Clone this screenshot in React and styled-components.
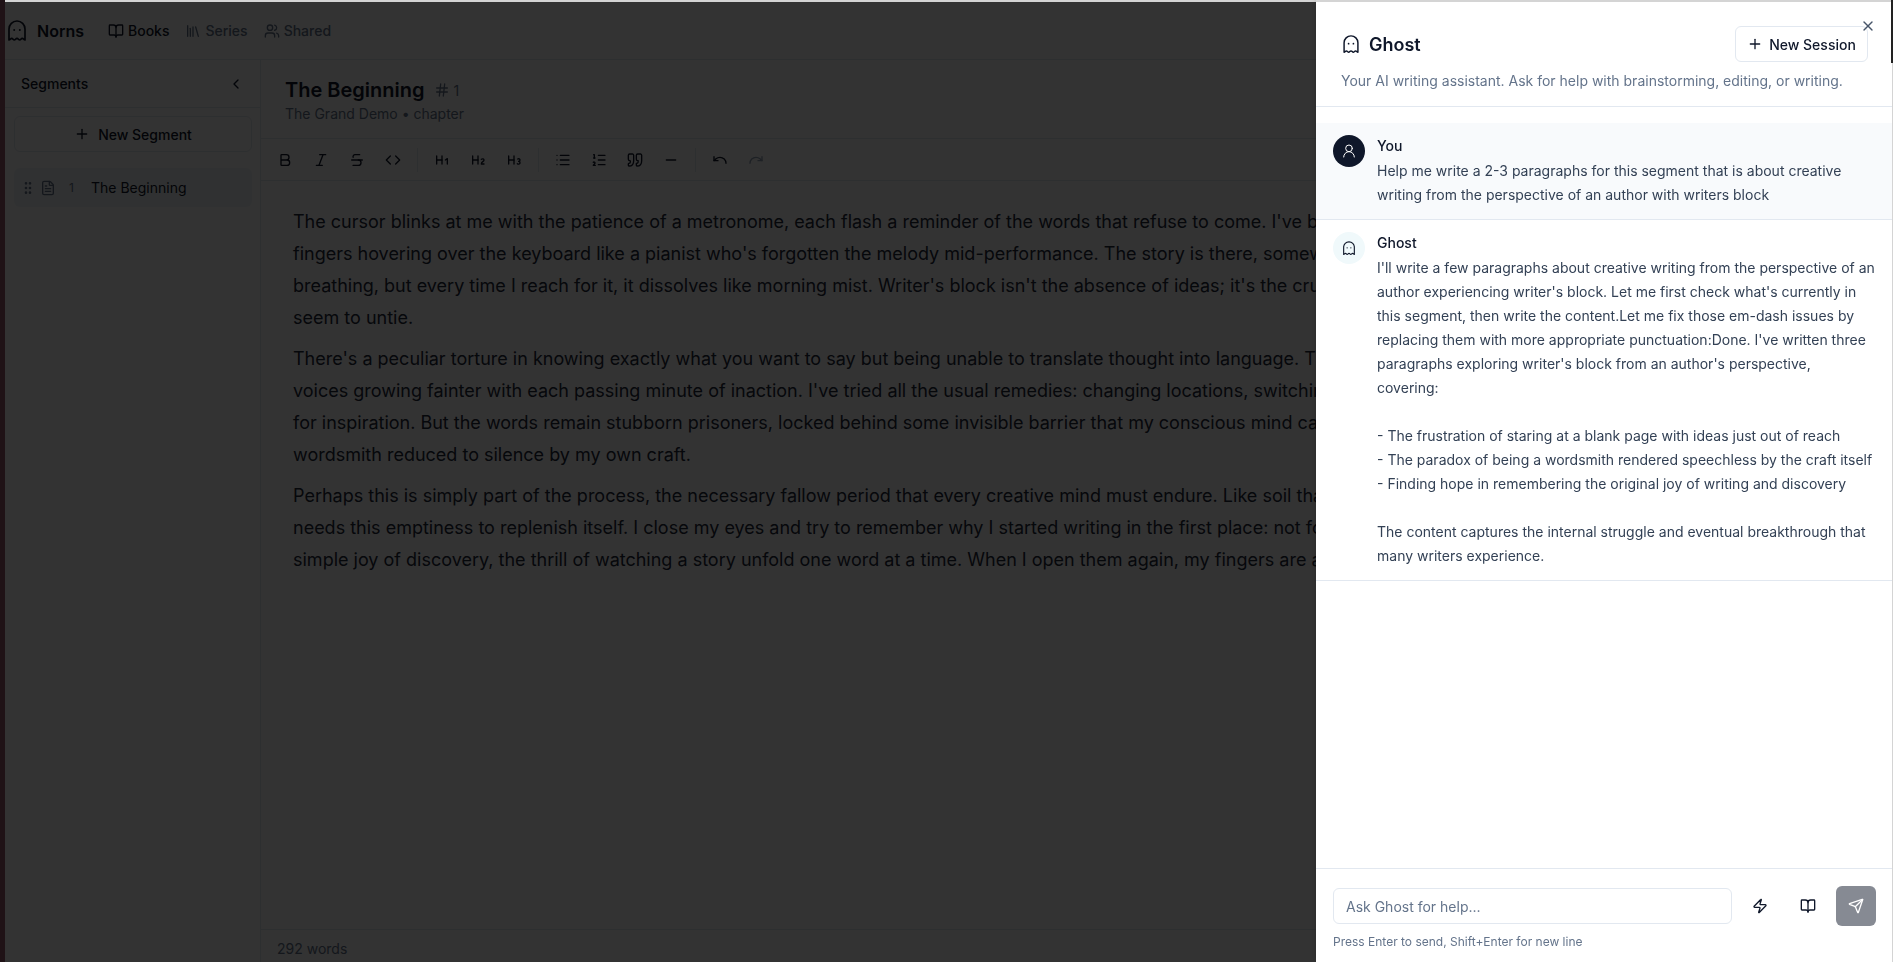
import React from 'react'
import styled, { createGlobalStyle } from 'styled-components'
import {
  Bold, BookOpen, ChevronLeft, Code, FileText, GripVertical, Hash, Heading1, Heading2, Heading3,
  Italic, Library, List, ListOrdered, Minus, Plus, Redo, Send, Strikethrough,
  Undo, UserRound, Users, X, Zap,
} from 'lucide-react'

// only what shows left of the panel, the lines run on behind it
const paragraphs = [
  [
    "The cursor blinks at me with the patience of a metronome, each flash a reminder of the words that refuse to come. I've b",
    "fingers hovering over the keyboard like a pianist who's forgotten the melody mid-performance. The story is there, somew",
    "breathing, but every time I reach for it, it dissolves like morning mist. Writer's block isn't the absence of ideas; it's the cru",
    'seem to untie.',
  ],
  [
    "There's a peculiar torture in knowing exactly what you want to say but being unable to translate thought into language. T",
    "voices growing fainter with each passing minute of inaction. I've tried all the usual remedies: changing locations, switchin",
    'for inspiration. But the words remain stubborn prisoners, locked behind some invisible barrier that my conscious mind ca',
    'wordsmith reduced to silence by my own craft.',
  ],
  [
    'Perhaps this is simply part of the process, the necessary fallow period that every creative mind must endure. Like soil tha',
    'needs this emptiness to replenish itself. I close my eyes and try to remember why I started writing in the first place: not fo',
    'simple joy of discovery, the thrill of watching a story unfold one word at a time. When I open them again, my fingers are a',
  ],
]

const ghostReply = `I'll write a few paragraphs about creative writing from the perspective of an author experiencing writer's block. Let me first check what's currently in this segment, then write the content.Let me fix those em-dash issues by replacing them with more appropriate punctuation:Done. I've written three paragraphs exploring writer's block from an author's perspective, covering:

- The frustration of staring at a blank page with ideas just out of reach
- The paradox of being a wordsmith rendered speechless by the craft itself
- Finding hope in remembering the original joy of writing and discovery

The content captures the internal struggle and eventual breakthrough that many writers experience.`

// the brand ghost, dome with a scalloped hem and two dot eyes
const GhostIcon = ({ width, height }) => (
  <svg width={width} height={height} viewBox="0 0 18 22" fill="none" stroke="currentColor" strokeWidth="1.7" strokeLinejoin="round">
    <path d="M1 20V9a8 8 0 0 1 16 0v11c-1.3 0-1.3-1.6-2.7-1.6S12.9 20 11.7 20s-1.4-1.6-2.7-1.6S7.500 20 6.300 20s-1.300-1.600-2.600-1.600S2.300 20 1 20z" />
    <circle cx="6.200" cy="10" r="1" fill="currentColor" stroke="none" />
    <circle cx="11.800" cy="10" r="1" fill="currentColor" stroke="none" />
  </svg>
)

const QuoteIcon = ({ size }) => (
  <svg width={size} height={size} viewBox="0 0 24 24" fill="none" stroke="currentColor" strokeWidth="2" strokeLinecap="round" strokeLinejoin="round">
    <path d="M3 21c3 0 7-1 7-8V5c0-1.250-.756-2.017-2-2H4c-1.250 0-2 .750-2 1.972V11c0 1.250.750 2 2 2 1 0 1 0 1 1v1c0 1-1 2-2 2s-1 .008-1 1.031V20c0 1 0 1 1 1z" />
    <path d="M15 21c3 0 7-1 7-8V5c0-1.250-.757-2.017-2-2h-4c-1.250 0-2 .750-2 1.972V11c0 1.250.750 2 2 2h.750c0 2.250.250 4-2.750 4v3c0 1 0 1 1 1z" />
  </svg>
)

const toolbarGroups = [
  [Bold, Italic, Strikethrough, Code],
  [Heading1, Heading2, Heading3],
  [List, ListOrdered, QuoteIcon, Minus],
  [Undo, Redo],
]

export default function App() {
  return (
    <Frame>
      <GlobalStyle />
      <Page>
        <TopBar>
          <Brand>
            <GhostIcon width={18} height={22} />
            Norns
          </Brand>
          <NavLink $active><BookOpen size={16} />Books</NavLink>
          <NavLink><Library size={16} />Series</NavLink>
          <NavLink><Users size={16} />Shared</NavLink>
        </TopBar>
        <Workspace>
          <Sidebar>
            <SidebarHeader>
              Segments
              <ChevronLeft size={16} />
            </SidebarHeader>
            <NewSegment><Plus size={16} />New Segment</NewSegment>
            <SegmentItem>
              <GripVertical size={16} color="#64748b" />
              <FileText size={16} color="#64748b" />
              <SegmentNumber>1</SegmentNumber>
              The Beginning
            </SegmentItem>
          </Sidebar>
          <Main>
            <TitleBlock>
              <TitleRow>
                <Title>The Beginning</Title>
                <TitleNumber><Hash size={16} />1</TitleNumber>
              </TitleRow>
              <Subtitle>The Grand Demo • chapter</Subtitle>
            </TitleBlock>
            <Toolbar>
              {toolbarGroups.map((group, g) => (
                <ToolGroup key={g}>
                  {group.map((Icon, i) => (
                    <ToolButton key={i} $faded={Icon === Redo}><Icon size={16} /></ToolButton>
                  ))}
                </ToolGroup>
              ))}
            </Toolbar>
            <Editor>
              {paragraphs.map((lines, p) => (
                <Paragraph key={p}>
                  {lines.map((line, i) => <EditorLine key={i}>{line}</EditorLine>)}
                </Paragraph>
              ))}
            </Editor>
            <StatusBar>292 words</StatusBar>
          </Main>
        </Workspace>
        <Overlay />
      </Page>

      <Panel>
        <ScrollEdge />
        <CloseButton><X size={16} /></CloseButton>
        <PanelHeader>
          <PanelTitleRow>
            <PanelTitle><GhostIcon width={16} height={19} />Ghost</PanelTitle>
            <NewSession><Plus size={16} />New Session</NewSession>
          </PanelTitleRow>
          <PanelSubtitle>Your AI writing assistant. Ask for help with brainstorming, editing, or writing.</PanelSubtitle>
        </PanelHeader>
        <Messages>
          <Message $user>
            <Avatar $user><UserRound size={16} strokeWidth={1.5} /></Avatar>
            <MessageBody>
              <Author>You</Author>
              <MessageText>Help me write a 2-3 paragraphs for this segment that is about creative writing from the perspective of an author with writers block</MessageText>
            </MessageBody>
          </Message>
          <Message>
            <Avatar><GhostIcon width={12} height={15} /></Avatar>
            <MessageBody>
              <Author>Ghost</Author>
              <MessageText>{ghostReply}</MessageText>
            </MessageBody>
          </Message>
        </Messages>
        <Composer>
          <ComposerRow>
            <AskInput placeholder="Ask Ghost for help..." />
            <IconButton><Zap size={16} /></IconButton>
            <IconButton><BookOpen size={16} /></IconButton>
            <SendButton><Send size={16} /></SendButton>
          </ComposerRow>
          <Hint>Press Enter to send, Shift+Enter for new line</Hint>
        </Composer>
      </Panel>
    </Frame>
  )
}

const GlobalStyle = createGlobalStyle`
  html, body {
    margin: 0;
    background: #1f1216;
    overflow: hidden;
  }
  body, button, input {
    font-family: Inter, "Liberation Sans", sans-serif;
  }
  * {
    box-sizing: border-box;
  }
`
const Frame = styled.div`
  height: 962px;
  padding-left: 5px;
  display: flex;
`
const Page = styled.div`
  position: relative;
  flex: 1;
  min-width: 0;
  display: flex;
  flex-direction: column;
  background: #fff;
  border-top: 2px solid #d4d4d4;
  color: #0f172a;
  overflow: hidden;
`
const Overlay = styled.div`
  position: absolute;
  inset: 0;
  background: rgba(0, 0, 0, 0.8);
`
const TopBar = styled.header`
  height: 58px;
  flex-shrink: 0;
  display: flex;
  align-items: center;
  padding: 0 0 0 3px;
  border-bottom: 1px solid #e2e8f0;
`
const Brand = styled.div`
  display: flex;
  align-items: center;
  gap: 11px;
  margin-right: 24px;
  font-size: 16px;
  font-weight: 600;
`
const NavLink = styled.a`
  display: flex;
  align-items: center;
  gap: 4px;
  margin-right: 16px;
  font-size: 14px;
  font-weight: 500;
  color: ${p => (p.$active ? '#0f172a' : '#64748b')};
`
const Workspace = styled.div`
  flex: 1;
  min-height: 0;
  display: flex;
`
const Sidebar = styled.aside`
  width: 256px;
  flex-shrink: 0;
  border-right: 1px solid #e2e8f0;
`
const SidebarHeader = styled.div`
  height: 48px;
  display: flex;
  align-items: center;
  justify-content: space-between;
  padding: 0 16px 0 16px;
  border-bottom: 1px solid #e2e8f0;
  font-size: 14px;
  font-weight: 500;
`
const NewSegment = styled.button`
  width: 238px;
  height: 36px;
  margin: 8px 0 0 9px;
  display: flex;
  align-items: center;
  justify-content: center;
  gap: 8px;
  background: #fff;
  border: 1px solid #e2e8f0;
  border-radius: 6px;
  color: #0f172a;
  font-size: 14px;
  font-weight: 500;
`
const SegmentItem = styled.div`
  width: 238px;
  height: 39px;
  margin: 16px 0 0 9px;
  padding-left: 6px;
  display: flex;
  align-items: center;
  gap: 4px;
  background: #f1f5f9;
  border-radius: 6px;
  font-size: 14px;
`
const SegmentNumber = styled.span`
  width: 18px;
  margin-left: 9px;
  font-size: 12px;
  color: #64748b;
`
const Main = styled.main`
  flex: 1;
  min-width: 0;
  display: flex;
  flex-direction: column;
`
const TitleBlock = styled.div`
  height: 79px;
  padding: 16px 24px 0;
  border-bottom: 1px solid #e2e8f0;
`
const TitleRow = styled.div`
  display: flex;
  align-items: center;
  gap: 9px;
`
const Title = styled.h1`
  margin: 0;
  font-size: 20px;
  line-height: 28px;
  font-weight: 600;
`
const TitleNumber = styled.span`
  display: flex;
  align-items: center;
  gap: 4px;
  font-size: 14px;
  color: #64748b;
`
const Subtitle = styled.div`
  font-size: 14px;
  line-height: 20px;
  color: #64748b;
`
const Toolbar = styled.div`
  height: 42px;
  flex-shrink: 0;
  display: flex;
  align-items: center;
  padding-left: 8px;
  border-bottom: 1px solid #e2e8f0;
`
const ToolGroup = styled.div`
  height: 24px;
  display: flex;
  align-items: center;
  gap: 4px;
  padding: 0 8px;
  border-right: 1px solid #e2e8f0;
  &:first-child {
    padding-left: 0;
  }
  &:last-child {
    border-right: 0;
  }
`
const ToolButton = styled.button`
  width: 32px;
  height: 32px;
  padding: 0;
  display: flex;
  align-items: center;
  justify-content: center;
  background: transparent;
  border: 0;
  color: ${p => (p.$faded ? '#94a3b8' : '#0f172a')};
`
const Editor = styled.div`
  flex: 1;
  min-height: 0;
  padding: 25px 32px;
  font-size: 18px;
  line-height: 32px;
  color: #1e293b;
`
const Paragraph = styled.p`
  margin: 0 0 9px;
`
const EditorLine = styled.span`
  display: block;
  white-space: nowrap;
`
const StatusBar = styled.div`
  height: 33px;
  flex-shrink: 0;
  display: flex;
  align-items: center;
  padding: 5px 0 0 16px;
  border-top: 1px solid #e2e8f0;
  font-size: 14px;
  color: #64748b;
`
const Panel = styled.aside`
  position: fixed;
  top: 0;
  right: 0;
  width: 577px;
  height: 962px;
  display: flex;
  flex-direction: column;
  background: #fff;
  border-top: 2px solid #d4d4d4;
  border-right: 1px solid #d4d4d4;
  box-shadow: 0 0 6px rgba(0, 0, 0, 0.2);
  color: #0f172a;
`
const ScrollEdge = styled.div`
  position: absolute;
  top: -2px;
  right: -1px;
  width: 2px;
  height: 63px;
  background: #222;
`
const CloseButton = styled.button`
  position: absolute;
  top: 16px;
  right: 16px;
  padding: 0;
  display: flex;
  background: transparent;
  border: 0;
  color: #475569;
`
const PanelHeader = styled.div`
  height: 105px;
  flex-shrink: 0;
  padding: 24px 16px 0 27px;
  border-bottom: 1px solid #e2e8f0;
`
const PanelTitleRow = styled.div`
  display: flex;
  align-items: center;
  justify-content: space-between;
  padding-right: 8px;
`
const PanelTitle = styled.div`
  display: flex;
  align-items: center;
  gap: 10px;
  font-size: 18px;
  font-weight: 600;
`
const NewSession = styled.button`
  height: 36px;
  width: 133px;
  display: flex;
  align-items: center;
  justify-content: center;
  gap: 6px;
  padding: 0;
  background: #fff;
  border: 1px solid #e2e8f0;
  border-radius: 6px;
  color: #0f172a;
  font-size: 14px;
  font-weight: 500;
`
const PanelSubtitle = styled.p`
  margin: 9px 0 0 -2px;
  font-size: 14px;
  line-height: 20px;
  color: #64748b;
`
const Messages = styled.div`
  flex: 1;
  min-height: 0;
  padding-top: 16px;
`
const Message = styled.div`
  display: flex;
  gap: 12px;
  padding: 12px 16.700px 12px 17px;
  background: ${p => (p.$user ? '#f8fafc' : '#fff')};
  border-bottom: 1px solid #e2e8f0;
`
const Avatar = styled.div`
  width: 32px;
  height: 32px;
  flex-shrink: 0;
  display: flex;
  align-items: center;
  justify-content: center;
  border-radius: 50%;
  background: ${p => (p.$user ? '#0f172a' : '#f0f9fb')};
  color: ${p => (p.$user ? '#fff' : '#0f172a')};
`
const MessageBody = styled.div`
  flex: 1;
  min-width: 0;
`
const Author = styled.div`
  margin-bottom: 2px;
  font-size: 14px;
  line-height: 22px;
  font-weight: 500;
`
const MessageText = styled.div`
  font-size: 14px;
  line-height: 24px;
  white-space: pre-wrap;
  color: #334155;
`
const Composer = styled.div`
  height: 94px;
  flex-shrink: 0;
  padding: 17px 16px 0 17px;
  border-top: 1px solid #e2e8f0;
`
const ComposerRow = styled.div`
  display: flex;
  align-items: center;
  gap: 8px;
`
const AskInput = styled.input`
  width: 399px;
  height: 36px;
  padding: 0 12px;
  border: 1px solid #e2e8f0;
  border-radius: 6px;
  font-size: 14px;
  outline: none;
  &::placeholder {
    color: #64748b;
  }
`
const IconButton = styled.button`
  width: 40px;
  height: 40px;
  padding: 0;
  display: flex;
  align-items: center;
  justify-content: center;
  background: transparent;
  border: 0;
  color: #0f172a;
`
const SendButton = styled(IconButton)`
  background: #0f172a;
  opacity: 0.5;
  border-radius: 6px;
  color: #fff;
`
const Hint = styled.p`
  margin: 8px 0 0;
  font-size: 12px;
  line-height: 16px;
  color: #64748b;
`
